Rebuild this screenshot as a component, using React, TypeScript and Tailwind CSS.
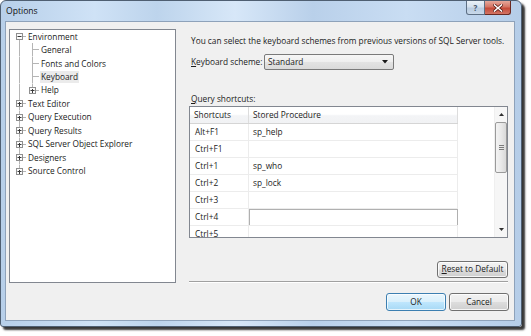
import React from "react";

type TreeRow = {
  label: string;
  level: 0 | 1;
  box?: "plus" | "minus";
  first?: boolean;
  last?: boolean;
  lastChild?: boolean;
  selected?: boolean;
};

const treeRows: TreeRow[] = [
  { label: "Environment", level: 0, box: "minus", first: true },
  { label: "General", level: 1 },
  { label: "Fonts and Colors", level: 1 },
  { label: "Keyboard", level: 1, selected: true },
  { label: "Help", level: 1, box: "plus", lastChild: true },
  { label: "Text Editor", level: 0, box: "plus" },
  { label: "Query Execution", level: 0, box: "plus" },
  { label: "Query Results", level: 0, box: "plus" },
  { label: "SQL Server Object Explorer", level: 0, box: "plus" },
  { label: "Designers", level: 0, box: "plus" },
  { label: "Source Control", level: 0, box: "plus", last: true },
];

const RH = 13.47;
const CY = 6.5;
const LINE = "#b5b5b5";

function ExpandBox({ cx, kind }: { cx: number; kind: "plus" | "minus" }) {
  return (
    <g>
      <rect x={cx - 2.5} y={CY - 3} width={6} height={6} fill="#fbfbfb" stroke="#8f8f8f" strokeWidth={1} />
      <line x1={cx - 1.5} x2={cx + 2.5} y1={CY} y2={CY} stroke="#3a3a3a" strokeWidth={1} />
      {kind === "plus" && <line x1={cx + 0.5} x2={cx + 0.5} y1={CY - 1.5} y2={CY + 2.5} stroke="#3a3a3a" strokeWidth={1} />}
    </g>
  );
}

function Gutter({ row }: { row: TreeRow }) {
  const w = row.level === 0 ? 17 : 30;
  const l0 = 9.5;
  const l1 = 22.5;
  return (
    <svg width={w} height={RH} className="shrink-0 block">
      {row.level === 0 ? (
        <line x1={l0} x2={l0} y1={row.first ? CY : 0} y2={row.last ? CY : RH} stroke={LINE} />
      ) : (
        <line x1={l0} x2={l0} y1={0} y2={RH} stroke={LINE} />
      )}
      {row.level === 0 && <line x1={l0} x2={16} y1={CY} y2={CY} stroke={LINE} />}
      {row.level === 0 && row.box && <ExpandBox cx={l0 - 0.5} kind={row.box} />}
      {row.level === 1 && (
        <>
          <line x1={l1} x2={l1} y1={0} y2={row.lastChild ? CY : RH} stroke={LINE} />
          <line x1={l1} x2={29} y1={CY} y2={CY} stroke={LINE} />
          {row.box && <ExpandBox cx={l1 - 0.5} kind={row.box} />}
        </>
      )}
    </svg>
  );
}

const gridRows: { k: string; v: string; edit?: boolean }[] = [
  { k: "Alt+F1", v: "sp_help" },
  { k: "Ctrl+F1", v: "" },
  { k: "Ctrl+1", v: "sp_who" },
  { k: "Ctrl+2", v: "sp_lock" },
  { k: "Ctrl+3", v: "" },
  { k: "Ctrl+4", v: "", edit: true },
  { k: "Ctrl+5", v: "" },
];

function Btn({ children, w, h, def }: { children: React.ReactNode; w: string; h: string; def?: boolean }) {
  return (
    <div
      className={
        "flex items-center justify-center rounded-[3px] border " +
        w +
        " " +
        h +
        " " +
        (def
          ? "border-[#3c7fb1] bg-[linear-gradient(180deg,#eaf6fd_0%,#d9f0fc_48%,#bee6fd_52%,#a7d9f5_100%)] shadow-[inset_0_0_0_1px_rgba(255,255,255,0.7)]"
          : "border-[#707070] bg-[linear-gradient(180deg,#f2f2f2_0%,#ebebeb_48%,#dddddd_52%,#cfcfcf_100%)] shadow-[inset_0_0_0_1px_rgba(255,255,255,0.8)]")
      }
    >
      {children}
    </div>
  );
}

export default function App() {
  return (
    <div className="w-[531px] h-[336px] bg-white font-['Open_Sans',sans-serif] text-[8.3px] text-[#1b1b1b] leading-none">
      <div className="w-[522px] h-[327px] rounded-t-[6px] rounded-b-[3px] border border-[#4f5f72] bg-[linear-gradient(90deg,#b7cfe9_0%,#cfe2f6_18%,#bdd4ec_30%,#d7e7f8_45%,#b9d0ea_60%,#c9ddf3_78%,#b5cde8_100%)] shadow-[3px_3px_2px_rgba(20,20,20,0.85)] flex flex-col">
        {/* Title bar */}
        <div className="h-[20px] shrink-0 flex items-start">
          <div className="pl-[5px] pt-[6px] text-[8.6px] text-[#101010]">Options</div>
          <div className="ml-auto mr-[10px] flex">
            <div className="w-[19px] h-[14px] border border-[#5d6f84] border-t-0 rounded-bl-[3px] bg-[linear-gradient(180deg,#e9f0f7_0%,#d3e0ee_45%,#b9cce1_55%,#c9d9ea_100%)] flex items-center justify-center text-[8px] font-bold text-[#44546a]">
              ?
            </div>
            <div className="w-[26px] h-[14px] border border-[#6b2a22] border-t-0 border-l-0 rounded-br-[3px] bg-[linear-gradient(180deg,#e6a89b_0%,#d57564_45%,#c54a38_55%,#d27464_100%)] flex items-center justify-center">
              <svg width="10" height="8" viewBox="0 0 10 8">
                <path d="M1.5 1 L8.5 7 M8.5 1 L1.5 7" stroke="#5a1a12" strokeWidth="3" strokeLinecap="square" />
                <path d="M1.5 1 L8.5 7 M8.5 1 L1.5 7" stroke="#ffffff" strokeWidth="1.6" strokeLinecap="square" />
              </svg>
            </div>
          </div>
        </div>

        {/* Client area */}
        <div className="ml-[4px] mr-[6px] mb-[5px] flex-1 border border-[#8ea2ba] bg-[#f0f0f0] flex flex-col pt-[7px] pl-[3px] pr-[5px]">
          <div className="flex h-[254px]">
            {/* Tree */}
            <div className="w-[167px] h-[254px] border border-[#828790] bg-white overflow-hidden">
              {treeRows.map((r) => (
                <div key={r.label} className="flex items-stretch h-[13.47px]">
                  <Gutter row={r} />
                  <div className="flex items-center">
                    <span
                      className={
                        "flex items-center h-[11.5px] px-[1px] whitespace-nowrap " +
                        (r.selected ? "bg-[#ebebeb]" : "")
                      }
                    >
                      {r.label}
                    </span>
                  </div>
                </div>
              ))}
            </div>

            {/* Right column */}
            <div className="ml-[13px] w-[319px] flex flex-col">
              <div className="mt-[6px] h-[12px] pl-[2px] flex items-center whitespace-nowrap">
                You can select the keyboard schemes from previous versions of SQL Server tools.
              </div>
              <div className="mt-[7px] flex items-center h-[16px]">
                <div className="w-[75px] pl-[2px] whitespace-nowrap">
                  <span className="underline underline-offset-1">K</span>eyboard scheme:
                </div>
                <div className="w-[130px] h-[16px] rounded-[2px] border border-[#7a7a7a] bg-[linear-gradient(180deg,#f6f6f6_0%,#efefef_48%,#e3e3e3_52%,#dadada_100%)] flex items-center pl-[3px] pr-[5px]">
                  <span>Standard</span>
                  <svg width="6" height="4" viewBox="0 0 6 4" className="ml-auto">
                    <path d="M0 0 H6 L3 3.5 Z" fill="#1a1a1a" />
                  </svg>
                </div>
              </div>
              <div className="mt-[23px] h-[12px] pl-[2px] flex items-center whitespace-nowrap">
                <span className="underline underline-offset-1">Q</span>uery shortcuts:
              </div>
              {/* Grid */}
              <div className="mt-[1px] w-[319px] h-[132px] border border-[#828790] bg-white flex overflow-hidden">
                <div className="w-[268px] flex flex-col shrink-0">
                  <div className="flex h-[17px] shrink-0 border-b border-[#d5d5d5] bg-[linear-gradient(180deg,#ffffff_0%,#ffffff_45%,#f3f4f6_55%,#f1f2f4_100%)]">
                    <div className="w-[59px] border-r border-[#dddddd] pl-[4px] flex items-center">Shortcuts</div>
                    <div className="w-[209px] border-r border-[#dddddd] pl-[4px] flex items-center">Stored Procedure</div>
                  </div>
                  {gridRows.map((r) => (
                    <div key={r.k} className="flex h-[17px] shrink-0 border-b border-[#ececec]">
                      <div className="w-[59px] border-r border-[#ececec] pl-[5px] flex items-center">{r.k}</div>
                      <div
                        className={
                          "w-[209px] border-r pl-[4px] flex items-center " +
                          (r.edit ? "border-[#b0b0b0] shadow-[inset_0_1px_0_#b0b0b0,inset_1px_0_0_#b0b0b0]" : "border-[#ececec]")
                        }
                      >
                        {r.v}
                      </div>
                    </div>
                  ))}
                </div>
                <div className="flex-1" />
                {/* Scrollbar */}
                <div className="w-[13px] h-full flex flex-col bg-[#f6f6f6] border-l border-[#efefef]">
                  <div className="h-[15px] flex items-center justify-center shrink-0">
                    <svg width="5" height="3" viewBox="0 0 5 3">
                      <path d="M0 3 H5 L2.5 0 Z" fill="#303030" />
                    </svg>
                  </div>
                  <div className="h-[51px] shrink-0 rounded-[2px] border border-[#9a9a9a] bg-[linear-gradient(90deg,#f3f3f3_0%,#e9e9e9_50%,#d9d9d9_100%)] flex items-center justify-center">
                    <div className="flex flex-col gap-[1px]">
                      <div className="w-[5px] h-[1px] bg-[#7b7b7b]" />
                      <div className="w-[5px] h-[1px] bg-[#7b7b7b]" />
                      <div className="w-[5px] h-[1px] bg-[#7b7b7b]" />
                    </div>
                  </div>
                  <div className="flex-1" />
                  <div className="h-[15px] flex items-center justify-center shrink-0">
                    <svg width="5" height="3" viewBox="0 0 5 3">
                      <path d="M0 0 H5 L2.5 3 Z" fill="#303030" />
                    </svg>
                  </div>
                </div>
              </div>
              <div className="mt-[23px] flex justify-end">
                <Btn w="w-[71px]" h="h-[17px]">
                  <span>
                    <span className="underline underline-offset-1">R</span>eset to Default
                  </span>
                </Btn>
              </div>
              <div className="mt-[3px] h-[2px] border-t border-[#a0a0a0] border-b border-b-white" />
            </div>
          </div>
          {/* Bottom buttons */}
          <div className="mt-[10px] flex justify-end gap-[3px]">
            <Btn w="w-[60px]" h="h-[18px]" def>
              OK
            </Btn>
            <Btn w="w-[60px]" h="h-[18px]">
              Cancel
            </Btn>
          </div>
        </div>
      </div>
    </div>
  );
}
